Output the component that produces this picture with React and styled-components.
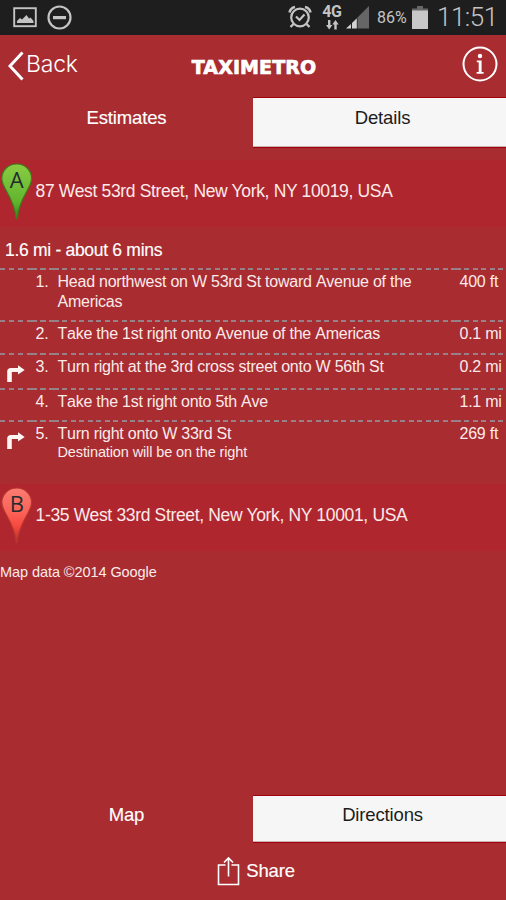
import React from 'react';
import styled, { createGlobalStyle } from 'styled-components';

const steps = [
  {
    text: 'Head northwest on W 53rd St toward Avenue of the Americas',
    distance: '400 ft',
    height: 52,
  },
  {
    text: 'Take the 1st right onto Avenue of the Americas',
    distance: '0.1 mi',
    height: 32.5,
  },
  {
    text: 'Turn right at the 3rd cross street onto W 56th St',
    distance: '0.2 mi',
    height: 35,
    turn: true,
  },
  { text: 'Take the 1st right onto 5th Ave', distance: '1.1 mi', height: 32.5 },
  {
    text: 'Turn right onto W 33rd St',
    note: 'Destination will be on the right',
    distance: '269 ft',
    height: 64,
    turn: true,
  },
];

const PictureIcon = () => (
  <svg width="24" height="21" viewBox="0 0 24 21">
    <rect x="1.200" y="1.200" width="21.600" height="18" fill="none" stroke="#c4c4c4" strokeWidth="1.900" />
    <path d="M4 16v-2l3-3 2 1.500 4.500-4.500 2.500 3.500 1.500-1 3 3.500V16z" fill="#c4c4c4" />
  </svg>
);

const BlockIcon = () => (
  <svg width="25" height="25" viewBox="0 0 25 25">
    <circle cx="12.500" cy="12.500" r="11" fill="none" stroke="#c4c4c4" strokeWidth="2.200" />
    <rect x="6" y="11" width="13" height="3.200" fill="#c4c4c4" />
  </svg>
);

const AlarmIcon = () => (
  <svg width="24" height="24" viewBox="0 0 24 24" fill="none" stroke="#c4c4c4">
    <circle cx="12" cy="12.500" r="8.800" strokeWidth="2.200" />
    <path d="M8 11.500l3.500 3.500 5-5.500" strokeWidth="2.200" />
    <path d="M1.500 7.500Q2.500 3 7 2M22.500 7.500Q21.500 3 17 2" strokeWidth="2.600" />
    <path d="M5.500 19l-3 3M18.500 19l3 3" strokeWidth="2.400" />
  </svg>
);

const DataArrows = () => (
  <svg width="13" height="10" viewBox="0 0 13 10" fill="#c4c4c4">
    <path d="M2 0h2.400v5H6.400L3.200 9.500 0 5h2zM8.300 9.500h2.400V4.500h2L9.500 0 6.300 4.500h2z" />
  </svg>
);

const SignalIcon = () => (
  <svg width="24" height="23" viewBox="0 0 24 23">
    <path d="M11.500 11.500L23 0v22.500H11.500z" fill="#666" />
    <path d="M0 22.500L5 18v4.500zM6 17l4.800-4.800v10.300H6z" fill="#d2d2d2" />
  </svg>
);

const BatteryIcon = () => (
  <svg width="16" height="23" viewBox="0 0 16 23">
    <path d="M5 0h6v2.500h5V5H0V2.500h5z" fill="#666" />
    <rect y="4.500" width="16" height="18.500" fill="#c8c8c8" />
  </svg>
);

const ChevronIcon = () => (
  <svg width="16" height="30" viewBox="0 0 16 30">
    <path d="M14.500 1.500L2 15l12.500 13.500" fill="none" stroke="#fff" strokeWidth="3" />
  </svg>
);

const InfoIcon = () => (
  <svg width="36" height="36" viewBox="0 0 36 36">
    <circle cx="18" cy="18" r="16.500" fill="none" stroke="#fff" strokeWidth="2" />
    <circle cx="18" cy="10" r="2.200" fill="#fff" />
    <path d="M14.800 14.500h4.800V26h2v1.800h-7V26h2.100v-9.700h-1.900z" fill="#fff" />
  </svg>
);

const TurnIcon = () => (
  <svg width="18" height="18" viewBox="0 0 18 18">
    <path d="M0.200 17V6.500Q.2 3 4 3h7V.3L17.700 5 11 9.500V7H4.800V17z" fill="#fff6f4" />
  </svg>
);

const ShareIcon = () => (
  <svg width="23" height="30" viewBox="0 0 23 30" fill="none" stroke="#fff" strokeWidth="1.600">
    <path d="M8.500 9H1.500v19.500h20V9h-7" />
    <path d="M11.500 20.500V2M7 6.500L11.500 2 16 6.500" />
  </svg>
);

const Pin = ({ letter, green }) => {
  const id = `pin-${letter}`;
  return (
    <svg width="33" height="58" viewBox="0 0 33 58">
      <defs>
        <linearGradient id={id} x1="0" y1="0" x2="0" y2="1">
          <stop offset="0" stopColor={green ? '#8acb43' : '#fb7c72'} />
          <stop offset="0.450" stopColor={green ? '#70bd36' : '#fb6257'} />
          <stop offset="0.700" stopColor={green ? '#61b32e' : '#f6483e'} />
          <stop offset="1" stopColor={green ? '#2f8414' : '#b4302b'} />
        </linearGradient>
      </defs>
      <path
        d="M16.700 1C8.200 1 1.800 7.600 1.800 15.500c0 10 12 18 14.300 39.500 0.300 1 .9 1 1.200 0 2.300-21.500 14.300-29.500 14.300-39.500C31.600 7.600 25.200 1 16.700 1z"
        fill={`url(#${id})`}
        stroke={green ? '#3f7a1b' : '#b8352e'}
        strokeWidth="1.200"
      />
      <text
        x="16.800"
        y="24.500"
        textAnchor="middle"
        fontFamily="Open Sans, sans-serif"
        fontSize="22"
        fontWeight="400"
        fill="#222c30"
      >
        {letter}
      </text>
    </svg>
  );
};

const App = () => (
  <Screen>
    <GlobalStyle />
    <StatusBar>
      <StatusGroup $gap={10}>
        <PictureIcon />
        <BlockIcon />
      </StatusGroup>
      <StatusGroup>
        <AlarmIcon />
        <Network>
          4G
          <DataArrows />
        </Network>
        <SignalIcon />
        <Percent>86%</Percent>
        <BatteryIcon />
        <Clock>11:51</Clock>
      </StatusGroup>
    </StatusBar>
    <Header>
      <BackButton>
        <ChevronIcon />
        <span>Back</span>
      </BackButton>
      <Logo>TAXIMETRO</Logo>
      <InfoButton>
        <InfoIcon />
      </InfoButton>
    </Header>
    <Tabs $height={48.5}>
      <Tab>Estimates</Tab>
      <Tab $light>Details</Tab>
    </Tabs>
    <Content>
      <Address>
        <Pin letter="A" green />
        <AddressText>87 West 53rd Street, New York, NY 10019, USA</AddressText>
      </Address>
      <Summary>1.6 mi - about 6 mins</Summary>
      {steps.map((step, i) => (
        <Step key={step.text} $height={step.height}>
          <Cell $period={9} $first>
            {step.turn && <TurnIcon />}
          </Cell>
          <Cell $period={8.5}>{i + 1}.</Cell>
          <Cell $period={8.45}>
            <StepText>{step.text}</StepText>
            {step.note && <Note>{step.note}</Note>}
          </Cell>
          <Cell $period={8.45}>{step.distance}</Cell>
        </Step>
      ))}
      <Address>
        <Pin letter="B" />
        <AddressText>1-35 West 33rd Street, New York, NY 10001, USA</AddressText>
      </Address>
      <Copyright>Map data ©2014 Google</Copyright>
    </Content>
    <Tabs $height={46.5}>
      <Tab $top={7}>Map</Tab>
      <Tab $light $top={7}>
        Directions
      </Tab>
    </Tabs>
    <ShareBar>
      <ShareIcon />
      <span>Share</span>
    </ShareBar>
  </Screen>
);

export default App;

const GlobalStyle = createGlobalStyle`
  * {
    box-sizing: border-box;
  }
  body {
    margin: 0;
    background: #a82c30;
  }
  svg {
    display: block;
    flex-shrink: 0;
  }
`;

const Screen = styled.div`
  display: flex;
  flex-direction: column;
  width: 506px;
  height: 900px;
  overflow: hidden;
  background: #a82c30;
  color: #fff;
  font-family: 'Liberation Sans', Arial, sans-serif;
`;

const StatusBar = styled.div`
  display: flex;
  justify-content: space-between;
  height: 35px;
  padding: 0 10px 0 13px;
  background: #1e1e1e;
  color: #c4c4c4;
`;

const StatusGroup = styled.div`
  display: flex;
  align-items: center;
  gap: ${(props) => props.$gap || 0}px;
  height: 34px;
`;

const Network = styled.div`
  display: flex;
  flex-direction: column;
  align-items: center;
  width: 20px;
  margin: 0 4px 0 10px;
  font: 700 16px/15px Roboto, sans-serif;
  letter-spacing: -0.4px;
  svg {
    margin-top: 1px;
  }
`;

const Percent = styled.span`
  width: 31px;
  margin: 2px 4px 0 7px;
  font: 400 16px/20px Roboto, sans-serif;
  letter-spacing: 0;
`;

const Clock = styled.span`
  width: 59px;
  margin-left: 9px;
  font: 300 26px/30px Roboto, sans-serif;
  letter-spacing: -0.5px;
`;

const Header = styled.header`
  display: grid;
  grid-template-columns: 1fr auto 1fr;
  align-items: center;
  height: 63px;
  padding: 0 8px;
`;

const BackButton = styled.div`
  display: flex;
  align-items: center;
  gap: 2px;
  height: 30px;
  margin-top: -2px;
  span {
    padding-bottom: 3px;
    font: 300 23px/26px Inter, sans-serif;
    letter-spacing: -0.2px;
  }
`;

const Logo = styled.h1`
  margin: 1px 0 0 2px;
  font: 700 19px/24px 'DejaVu Sans', sans-serif;
  letter-spacing: 0.1px;
  -webkit-text-stroke: 0.7px #fff;
`;

const InfoButton = styled.div`
  justify-self: end;
  margin-top: -5px;
`;

const Tabs = styled.nav`
  display: grid;
  grid-template-columns: 253px 253px;
  flex-shrink: 0;
  height: ${(props) => props.$height}px;
`;

const Tab = styled.div`
  padding-top: ${(props) => props.$top || 8}px;
  text-align: center;
  font-size: 18.5px;
  line-height: 23px;
  letter-spacing: -0.15px;
  -webkit-text-stroke: 0.15px #fff;
  ${(props) =>
    props.$light &&
    `
    padding-left: 6px;
    background: #f6f6f6;
    color: #1c1c1c;
    -webkit-text-stroke: 0;
    box-shadow: 0 -1px #a2000c, 0 1px #a2000c;
    border-bottom: 1px solid #c9b4b4;
  `}
`;

const Content = styled.main`
  display: flex;
  flex-direction: column;
  height: 649px;
  padding-top: 13.5px;
`;

const Address = styled.div`
  display: flex;
  align-items: center;
  height: 67px;
  background: #b0262e;
  svg {
    margin-top: -4px;
  }
`;

const AddressText = styled.span`
  padding: 0 0 4px 2.5px;
  font-size: 17.5px;
  letter-spacing: -0.34px;
  color: #fbeaea;
  white-space: nowrap;
`;

const Summary = styled.div`
  height: 41px;
  padding: 12px 5px 0;
  font-size: 17.5px;
  line-height: 22px;
  letter-spacing: -0.3px;
  -webkit-text-stroke: 0.15px #fff;
`;

const Step = styled.div`
  display: grid;
  grid-template-columns: 32px 22px 402px 50px;
  height: ${(props) => props.$height}px;
  flex-shrink: 0;
`;

/* each cell starts its own dash pattern, so dashes double up at the joins */
const Cell = styled.div`
  padding: ${(props) => (props.$first ? '12px 0 0 7px' : '4px 0 0 3.5px')};
  font-size: 16px;
  font-kerning: none;
  line-height: 19.5px;
  letter-spacing: -0.24px;
  color: #fbeaea;
  white-space: nowrap;
  background: repeating-linear-gradient(
      90deg,
      #978087 0 5px,
      transparent 5px ${(props) => props.$period}px
    )
    top / 100% 2px no-repeat;
`;

const StepText = styled.div`
  width: 370px;
  white-space: normal;
`;

const Note = styled.div`
  font-size: 14.5px;
  line-height: 17px;
  letter-spacing: -0.12px;
`;

const Copyright = styled.div`
  padding-top: 12px;
  font-size: 14.5px;
  line-height: 18px;
  letter-spacing: -0.07px;
  color: #fbeaea;
`;

const ShareBar = styled.footer`
  display: flex;
  align-items: center;
  justify-content: center;
  gap: 6px;
  height: 58px;
  padding-left: 6px;
  font-size: 18.5px;
  letter-spacing: -0.15px;
  -webkit-text-stroke: 0.15px #fff;
`;
